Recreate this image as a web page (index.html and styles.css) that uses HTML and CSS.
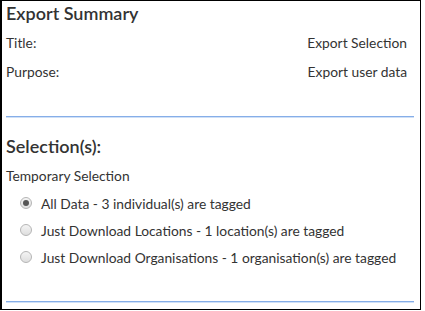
FILE: index.html
```html
<!DOCTYPE html>
<html>
<head>
<meta charset="utf-8">
<link rel="stylesheet" href="styles.css">
</head>
<body>
<div class="frame">
  <section class="summary">
    <h2 class="heading">Export Summary</h2>
    <div class="row"><span>Title:</span><span>Export Selection</span></div>
    <div class="row"><span>Purpose:</span><span>Export user data</span></div>
  </section>
  <div class="rule"></div>
  <section class="selections">
    <h2 class="heading">Selection(s):</h2>
    <div class="group">Temporary Selection</div>
    <ul class="options">
      <li class="option"><span class="radio checked"></span>All Data - 3 individual(s) are tagged</li>
      <li class="option"><span class="radio"></span>Just Download Locations - 1 location(s) are tagged</li>
      <li class="option"><span class="radio"></span>Just Download Organisations - 1 organisation(s) are tagged</li>
    </ul>
  </section>
  <div class="rule"></div>
</div>
</body>
</html>
```
FILE: styles.css
```css
html, body {
  margin: 0;
  padding: 0;
  background: #fff;
}
body {
  font-family: Lato, "Liberation Sans", sans-serif;
  color: #333;
  font-size: 13.8px;
}
.frame {
  box-sizing: border-box;
  width: 421px;
  height: 310px;
  border: 1px solid #000;
  border-left-width: 2px;
  padding: 0 6px 0 4px;
}
.heading {
  margin: 0;
  font-size: 18px;
  font-weight: 600;
  line-height: 22px;
  padding-top: 1px;
}
.row {
  display: flex;
  justify-content: space-between;
  line-height: 16px;
  margin-top: 11px;
  padding-right: 7px;
}
.row + .row {
  margin-top: 13px;
}
.rule {
  height: 1px;
  border-bottom: 1px solid #cfe0f7;
  background: #86aee8;
  margin-top: 36px;
}
.selections .heading {
  margin-top: 16px;
}
.group {
  margin-top: 11px;
  line-height: 16px;
}
.options {
  list-style: none;
  margin: 11px 0 0;
  padding: 0 0 0 14px;
}
.option {
  display: flex;
  align-items: center;
  height: 16px;
  margin-bottom: 11px;
}
.option:last-child {
  margin-bottom: 0;
}
.radio {
  box-sizing: border-box;
  width: 12px;
  height: 12px;
  border-radius: 50%;
  border: 1px solid #b5b5b5;
  background: linear-gradient(#f4f4f4, #dedede);
  margin-right: 9px;
  position: relative;
}
.radio.checked::after {
  content: "";
  position: absolute;
  left: 2px;
  top: 2px;
  width: 6px;
  height: 6px;
  border-radius: 50%;
  background: #555;
}
.selections + .rule {
  margin-top: 36px;
}
```
